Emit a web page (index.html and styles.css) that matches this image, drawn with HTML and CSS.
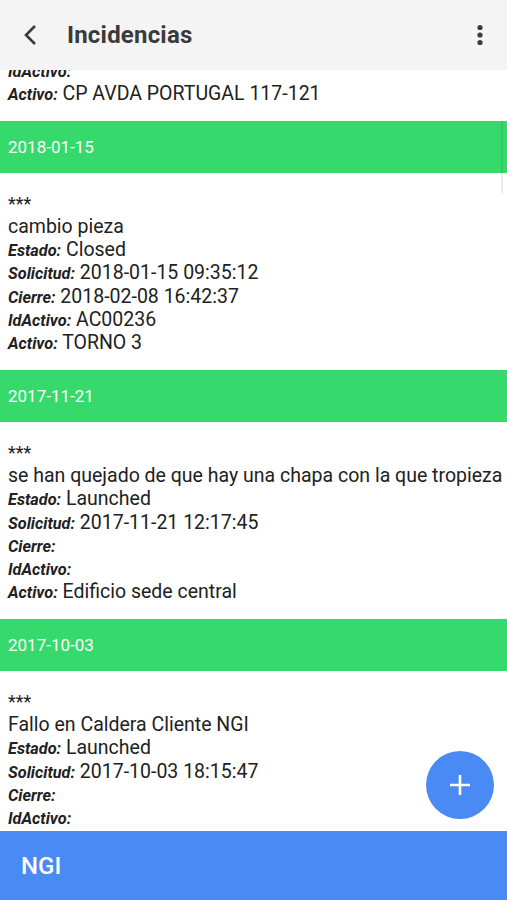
FILE: index.html
```html
<!DOCTYPE html>
<html lang="es">
<head>
    <meta charset="UTF-8">
    <meta name="viewport" content="width=device-width, initial-scale=1.0">
    <title>Incidencias</title>
    <link rel="stylesheet" href="styles.css">
</head>
<body>
    <div class="screen">
        <div class="appbar">
            <button class="icon-btn back">
                <svg width="16" height="22" viewBox="0 0 16 22"><path d="M12 2 L3 11 L12 20" fill="none" stroke="#3a3a3a" stroke-width="2.6"/></svg>
            </button>
            <h1 class="title">Incidencias</h1>
            <button class="icon-btn menu">
                <svg width="8" height="24" viewBox="0 0 8 24"><circle cx="4" cy="4.5" r="2.6" fill="#3a3a3a"/><circle cx="4" cy="12" r="2.6" fill="#3a3a3a"/><circle cx="4" cy="19.5" r="2.6" fill="#3a3a3a"/></svg>
            </button>
        </div>

        <div class="list">
            <div class="item partial">
                <div class="row"><span class="lbl">IdActivo:</span></div>
                <div class="row"><span class="lbl">Activo:</span> CP AVDA PORTUGAL 117-121</div>
            </div>

            <div class="day">2018-01-15</div>
            <div class="item">
                <div class="row stars">***</div>
                <div class="row">cambio pieza</div>
                <div class="row"><span class="lbl">Estado:</span> Closed</div>
                <div class="row"><span class="lbl">Solicitud:</span> 2018-01-15 09:35:12</div>
                <div class="row"><span class="lbl">Cierre:</span> 2018-02-08 16:42:37</div>
                <div class="row"><span class="lbl">IdActivo:</span> AC00236</div>
                <div class="row"><span class="lbl">Activo:</span> TORNO 3</div>
            </div>

            <div class="day">2017-11-21</div>
            <div class="item">
                <div class="row stars">***</div>
                <div class="row">se han quejado de que hay una chapa con la que tropieza</div>
                <div class="row"><span class="lbl">Estado:</span> Launched</div>
                <div class="row"><span class="lbl">Solicitud:</span> 2017-11-21 12:17:45</div>
                <div class="row"><span class="lbl">Cierre:</span></div>
                <div class="row"><span class="lbl">IdActivo:</span></div>
                <div class="row"><span class="lbl">Activo:</span> Edificio sede central</div>
            </div>

            <div class="day">2017-10-03</div>
            <div class="item">
                <div class="row stars">***</div>
                <div class="row">Fallo en Caldera Cliente NGI</div>
                <div class="row"><span class="lbl">Estado:</span> Launched</div>
                <div class="row"><span class="lbl">Solicitud:</span> 2017-10-03 18:15:47</div>
                <div class="row"><span class="lbl">Cierre:</span></div>
                <div class="row"><span class="lbl">IdActivo:</span></div>
                <div class="row"><span class="lbl">Activo:</span></div>
            </div>

            <div class="scrollbar"></div>
        </div>

        <div class="bottombar">NGI</div>

        <button class="fab">
            <svg width="22" height="22" viewBox="0 0 22 22"><path d="M11 1 V21 M1 11 H21" stroke="#fff" stroke-width="2.6"/></svg>
        </button>
    </div>
</body>
</html>
```

FILE: styles.css
```css
*{
    box-sizing:border-box;
}
body{
    margin:0;
    background:#fff;
    font-family:Roboto,"Noto Sans",sans-serif;
    color:#212121;
}
.screen{
    position:relative;
    width:507px;
    height:900px;
    display:flex;
    flex-direction:column;
    overflow:hidden;
}
.appbar{
    height:70px;
    flex:none;
    background:#f4f4f4;
    display:flex;
    align-items:center;
    padding:0 14px 0 18px;
    position:relative;
    z-index:2;
}
.icon-btn{
    background:none;
    border:none;
    padding:0;
    display:flex;
    align-items:center;
    justify-content:center;
}
.back{
    width:26px;
    height:30px;
}
.title{
    flex:1;
    margin:0 0 0 23px;
    font-size:24px;
    font-weight:700;
    color:#3a3a3a;
    letter-spacing:0.2px;
}
.menu{
    width:12px;
    height:30px;
    margin-right:7px;
}
.list{
    flex:1;
    overflow:hidden;
    position:relative;
}
.day{
    height:52px;
    background:#36d96b;
    color:#fff;
    font-size:17px;
    display:flex;
    align-items:center;
    padding:0 8px;
}
.item{
    padding:19px 8px 15px;
    white-space:nowrap;
}
.item.partial{
    margin-top:-11px;
    padding-top:0;
}
.row{
    height:23.3px;
    line-height:23.3px;
    font-size:19.5px;
    color:#212121;
}
.stars{
    font-size:18px;
}
.lbl{
    font-size:16.3px;
    font-weight:700;
    font-style:italic;
}
.scrollbar{
    position:absolute;
    right:4px;
    top:51px;
    width:2px;
    height:72px;
    background:rgba(0,0,0,0.08);
}
.bottombar{
    height:69px;
    flex:none;
    background:#4a8af4;
    color:#fff;
    font-size:24px;
    font-weight:500;
    display:flex;
    align-items:center;
    padding:0 21px;
}
.fab{
    position:absolute;
    left:426px;
    top:751px;
    width:68px;
    height:68px;
    border-radius:50%;
    border:none;
    background:#4a8af4;
    display:flex;
    align-items:center;
    justify-content:center;
    padding:0;
}
```
